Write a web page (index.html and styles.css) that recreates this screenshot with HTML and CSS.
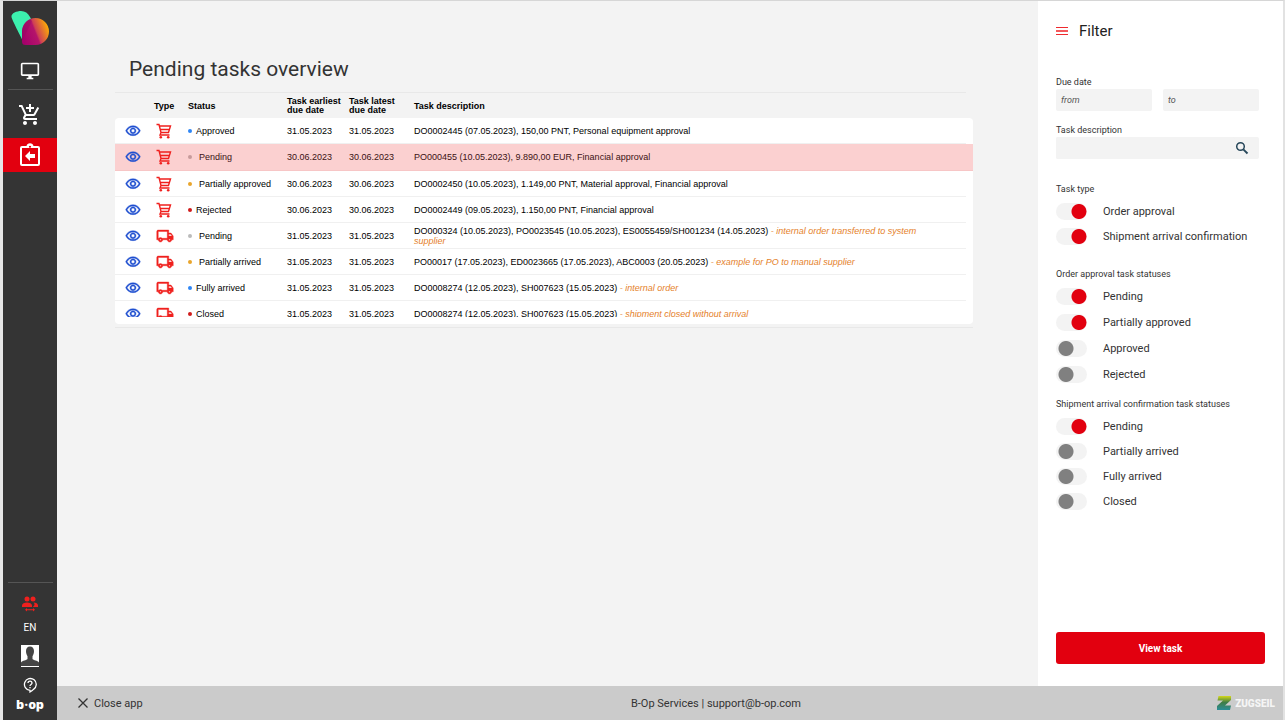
FILE: index.html
```html
<!DOCTYPE html>
<html lang="en">
<head>
<meta charset="utf-8">
<title>Pending tasks overview</title>
<link rel="stylesheet" href="styles.css">
</head>
<body>
<svg class="sprite" aria-hidden="true">
  <symbol id="eye" viewBox="0 0 24 24"><path stroke="currentColor" stroke-width=".6" d="M12 6c3.79 0 7.17 2.13 8.82 5.5C19.17 14.87 15.79 17 12 17s-7.17-2.13-8.82-5.5C4.83 8.13 8.21 6 12 6m0-2C7 4 2.73 7.11 1 11.5 2.73 15.89 7 19 12 19s9.27-3.11 11-7.5C21.27 7.11 17 4 12 4zm0 5c1.38 0 2.5 1.12 2.5 2.5S13.38 14 12 14s-2.5-1.12-2.5-2.5S10.62 9 12 9m0-2c-2.48 0-4.500 2.02-4.500 4.500S9.520 16 12 16s4.500-2.020 4.500-4.500S14.480 7 12 7z"/></symbol>
  <symbol id="cart" viewBox="0 0 16 16"><path d="M.5 1.500H3L5 9.500H12.500L14.500 3H3.400M4.200 6.500H13.300M5 9.500L4 12H13.500" fill="none" stroke="currentColor" stroke-width="1.400"/><circle cx="4.800" cy="14.200" r="1.300"/><circle cx="12.200" cy="14.200" r="1.300"/></symbol>
  <symbol id="truck" viewBox="0 0 24 24"><path stroke="currentColor" stroke-width=".5" d="M20 8h-3V4H3c-1.1 0-2 .9-2 2v11h2c0 1.66 1.34 3 3 3s3-1.34 3-3h6c0 1.66 1.34 3 3 3s3-1.34 3-3h2v-5l-3-4zM6 18c-.55 0-1-.45-1-1s.45-1 1-1 1 .45 1 1-.45 1-1 1zm9-3H8.220c-.55-.61-1.330-1-2.220-1s-1.670.39-2.220 1H3V6h12v9zm3 3c-.55 0-1-.45-1-1s.45-1 1-1 1 .45 1 1-.45 1-1 1zm-1-6V9.500h2.500l1.960 2.500H17z"/></symbol>
</svg>
<div class="app">
  <nav class="sidebar" aria-label="Main">
    <svg class="brand" viewBox="0 0 38 34" role="img" aria-label="Logo">
      <defs>
        <linearGradient id="warm" x1="0" y1=".7" x2="1" y2=".3"><stop offset="0" stop-color="#a5006b"/><stop offset=".48" stop-color="#b4146a"/><stop offset=".54" stop-color="#cf3f55"/><stop offset="1" stop-color="#ffb400"/></linearGradient>
      </defs>
      <path d="M.5 6C0 2 6 0 10 0c4 0 7 2 9 6l2 4-9 20C10 26 1 9 .5 6z" fill="#3cf0ae"/>
      <path d="M24.500 7A13.500 13.500 0 1 1 24.500 34H14.500Q11 34 11 30.500V20.500A13.500 13.500 0 0 1 24.500 7z" fill="url(#warm)"/>
      <path d="M19 8l2 2-10 20V20.500C11 15 14 10 19 8z" fill="#8c0b62" opacity=".35"/>
    </svg>
    <button class="nav-item desktop" aria-label="Desktop"><svg width="20" height="20" viewBox="0 0 24 24"><path d="M21 2H3c-1.100 0-2 .9-2 2v12c0 1.100.9 2 2 2h7v2H8v2h8v-2h-2v-2h7c1.100 0 2-.9 2-2V4c0-1.100-.9-2-2-2zm0 14H3V4h18v12z"/></svg></button>
    <hr class="rule">
    <button class="nav-item shop" aria-label="Shop"><svg width="24" height="24" viewBox="0 0 24 24"><path d="M11 9h2V6h3V4h-3V1h-2v3H8v2h3v3zm-4 9c-1.100 0-1.990.9-1.990 2S5.900 22 7 22s2-.9 2-2-.9-2-2-2zm10 0c-1.100 0-1.990.9-1.990 2s.89 2 1.990 2 2-.9 2-2-.9-2-2-2zm-9.830-3.250l.03-.12.9-1.630h7.450c.75 0 1.410-.41 1.750-1.030l3.860-7.010L19.420 4h-.01l-1.100 2-2.760 5H8.530l-.13-.27L6.160 6l-.95-2-.94-2H1v2h2l3.600 7.590-1.350 2.450c-.16.28-.25.61-.25.96 0 1.100.9 2 2 2h12v-2H7.420c-.13 0-.25-.11-.25-.25z"/></svg></button>
    <button class="nav-item active" aria-label="Tasks"><svg width="24" height="24" viewBox="0 0 24 24"><path fill-rule="evenodd" d="M4 3h4.500a3.600 3.600 0 0 1 7 0H20q2 0 2 2v16q0 2-2 2H4q-2 0-2-2V5q0-2 2-2zM4 5v16h16V5zM12 2.700a1 1 0 1 0 .01 0zM12 8v3h5v4h-5v3l-5-5z"/></svg></button>
    <div class="nav-bottom">
      <hr class="rule">
      <button class="nav-item switch" aria-label="Switch user"><svg width="16" height="16" viewBox="0 0 16 16"><circle cx="5" cy="3" r="2.500"/><circle cx="11" cy="3" r="2.500"/><path d="M0 11V9.500C0 7.500 2.500 6.500 5 6.500s5 1 5 3V11zM11 11h5V9.500c0-2-2-2.900-4.500-3 .8.600 1 1.500 1 2.500zM3 13.800l2-1.800v1.300h6V12l2 1.800-2 1.800v-1.300H5v1.300z"/></svg></button>
      <button class="nav-item lang">EN</button>
      <button class="nav-item" aria-label="Profile"><svg width="18" height="22" viewBox="0 0 18 22"><path fill="#fff" d="M0 0h18v22H0z"/><path fill="#454545" d="M9 1.500c2.500 0 4 1.800 4 4.500 0 2.500-.8 4-1.500 5.200V14c1 1.300 5 1.500 6.500 3.500V21H0v-3.500c1.500-2 5.500-2.200 6.500-3.500v-2.800C5.800 10 5 8.500 5 6c0-2.700 1.500-4.500 4-4.500z"/></svg></button>
      <button class="nav-item help" aria-label="Help"><svg class="line" width="16" height="16" viewBox="0 0 16 16" stroke="#fff" stroke-width="1.300"><path d="M8 15v-1.700A5.900 5.900 0 1 1 11.500 12.400Q10 14 8 15z"/><path d="M6 6c0-2.600 4-2.600 4 0 0 1.400-2 1.500-2 3M8 10v1.300"/></svg></button>
      <span class="bop">b·op</span>
    </div>
  </nav>
  <div class="stage">
    <div class="content">
      <main class="main">
        <h1>Pending tasks overview</h1>
        <div class="list">
          <div class="scroll">
            <table>
              <colgroup><col class="c-view"><col class="c-type"><col class="c-status"><col class="c-first"><col class="c-last"><col><col class="c-end"></colgroup>
              <thead><tr><th></th><th>Type</th><th>Status</th><th>Task earliest<br>due date</th><th>Task latest<br>due date</th><th>Task description</th><th class="end"></th></tr></thead>
              <tbody>
                <tr><td><svg class="eye"><use href="#eye"/></svg></td><td><svg class="type"><use href="#cart"/></svg></td><td><span class="status blue">Approved</span></td><td>31.05.2023</td><td>31.05.2023</td><td>DO0002445 (07.05.2023), 150,00 PNT, Personal equipment approval</td><td class="end"></td></tr>
                <tr class="selected"><td><svg class="eye"><use href="#eye"/></svg></td><td><svg class="type"><use href="#cart"/></svg></td><td><span class="status gray">Pending</span></td><td>30.06.2023</td><td>30.06.2023</td><td>PO000455 (10.05.2023), 9.890,00 EUR, Financial approval</td><td class="end"></td></tr>
                <tr><td><svg class="eye"><use href="#eye"/></svg></td><td><svg class="type"><use href="#cart"/></svg></td><td><span class="status amber">Partially approved</span></td><td>30.06.2023</td><td>30.06.2023</td><td>DO0002450 (10.05.2023), 1.149,00 PNT, Material approval, Financial approval</td><td class="end"></td></tr>
                <tr><td><svg class="eye"><use href="#eye"/></svg></td><td><svg class="type"><use href="#cart"/></svg></td><td><span class="status red">Rejected</span></td><td>30.06.2023</td><td>30.06.2023</td><td>DO0002449 (09.05.2023), 1.150,00 PNT, Financial approval</td><td class="end"></td></tr>
                <tr><td><svg class="eye"><use href="#eye"/></svg></td><td><svg class="type truck"><use href="#truck"/></svg></td><td><span class="status gray">Pending</span></td><td>31.05.2023</td><td>31.05.2023</td><td>DO000324 (10.05.2023), PO0023545 (10.05.2023), ES0055459/SH001234 (14.05.2023) <em>- internal order transferred to system supplier</em></td><td class="end"></td></tr>
                <tr><td><svg class="eye"><use href="#eye"/></svg></td><td><svg class="type truck"><use href="#truck"/></svg></td><td><span class="status amber">Partially arrived</span></td><td>31.05.2023</td><td>31.05.2023</td><td>PO00017 (17.05.2023), ED0023665 (17.05.2023), ABC0003 (20.05.2023) <em>- example for PO to manual supplier</em></td><td class="end"></td></tr>
                <tr><td><svg class="eye"><use href="#eye"/></svg></td><td><svg class="type truck"><use href="#truck"/></svg></td><td><span class="status blue">Fully arrived</span></td><td>31.05.2023</td><td>31.05.2023</td><td>DO0008274 (12.05.2023), SH007623 (15.05.2023) <em>- internal order</em></td><td class="end"></td></tr>
                <tr><td><svg class="eye"><use href="#eye"/></svg></td><td><svg class="type truck"><use href="#truck"/></svg></td><td><span class="status red">Closed</span></td><td>31.05.2023</td><td>31.05.2023</td><td>DO0008274 (12.05.2023), SH007623 (15.05.2023) <em>- shipment closed without arrival</em></td><td class="end"></td></tr>
              </tbody>
            </table>
          </div>
          <div class="list-end"></div>
        </div>
      </main>
      <aside class="filter">
        <h2><svg width="12" height="9" viewBox="0 0 12 9"><path fill="#ee2a2e" d="M0 0h12v1H0zM0 7h12v1H0z"/><path fill="#f4595c" d="M0 3h12v2H0z"/></svg>Filter</h2>
        <form class="form">
          <div class="fields">
            <label for="from">Due date</label>
            <div class="dates"><input id="from" type="text" placeholder="from"><input type="text" placeholder="to" aria-label="Due date to"></div>
            <label for="desc">Task description</label>
            <div class="search"><input id="desc" type="text"><button type="button" aria-label="Search"><svg class="line" width="14" height="14" viewBox="0 0 14 14" stroke="#27475a"><circle cx="5.500" cy="5.500" r="3.800" stroke-width="1.500"/><path d="M8.300 8.300L12.500 12.500" stroke-width="1.900"/></svg></button></div>
          </div>
          <fieldset class="kinds"><legend>Task type</legend>
            <label><input type="checkbox" checked>Order approval</label>
            <label><input type="checkbox" checked>Shipment arrival confirmation</label>
          </fieldset>
          <fieldset class="orders"><legend>Order approval task statuses</legend>
            <label><input type="checkbox" checked>Pending</label>
            <label><input type="checkbox" checked>Partially approved</label>
            <label><input type="checkbox">Approved</label>
            <label><input type="checkbox">Rejected</label>
          </fieldset>
          <fieldset><legend>Shipment arrival confirmation task statuses</legend>
            <label><input type="checkbox" checked>Pending</label>
            <label><input type="checkbox">Partially arrived</label>
            <label><input type="checkbox">Fully arrived</label>
            <label><input type="checkbox">Closed</label>
          </fieldset>
          <button class="primary" type="button">View task</button>
        </form>
      </aside>
    </div>
    <footer class="footer">
      <button class="close"><svg width="10" height="10" viewBox="0 0 10 10"><path d="M.5.5l9 9M9.500.5l-9 9" stroke="#333" stroke-width="1.300"/></svg>Close app</button>
      <span>B-Op Services | support@b-op.com</span>
      <span class="zugseil"><svg width="14" height="14" viewBox="0 0 14 14"><defs><linearGradient id="z" x1="0" y1="0" x2="0" y2="1"><stop offset="0" stop-color="#d4d81a"/><stop offset=".45" stop-color="#3f7d45"/><stop offset="1" stop-color="#2b8d98"/></linearGradient></defs><path fill="url(#z)" d="M1.500 0H14v4L8 9.500h6L13 14H0v-4l6-5.500H.5z"/></svg>ZUGSEIL</span>
    </footer>
  </div>
</div>
</body>
</html>
```
FILE: styles.css
```css
* { box-sizing: border-box; }
body { margin: 0; background: #f3f3f3; color: #333; font-family: Roboto, sans-serif; font-size: 11px; }
button { border: 0; padding: 0; background: none; color: inherit; font: inherit; cursor: pointer; }
svg { display: block; fill: currentColor; }
svg.line { fill: none; }
.sprite { position: absolute; width: 0; height: 0; }
.app { display: flex; min-height: 100vh; border-top: 1px solid #d6d6d6; border-left: 3px solid #e6e6e6; border-right: 2px solid #e2e2e2; }

.sidebar { display: flex; flex-direction: column; align-items: center; flex: none; width: 54px; padding-top: 10px; background: #343434; color: #fff; }
.brand { width: 38px; height: 34px; }
.nav-item { display: flex; justify-content: center; align-items: center; width: 100%; }
.rule { width: 45px; height: 1px; margin: 0; border: 0; background: #555; }
.desktop { margin: 16px 0 8px; }
.shop { margin: 13px 0 11px; }
.active { height: 34px; background: #e2000f; }
.nav-bottom { display: flex; flex-direction: column; align-items: center; width: 100%; margin-top: auto; padding-bottom: 7px; }
.switch { margin: 13px 0 10px; color: #f0201e; }
.lang { margin-bottom: 11px; font-size: 10px; line-height: 12px; }
.help { margin: 10px 0 4px; }
.bop { font: 900 12px/16px Inter, sans-serif; }

.stage { display: flex; flex: 1; flex-direction: column; min-width: 0; }
.content { display: flex; flex: 1; }
.main { flex: 1; min-width: 0; padding: 54px 65px 0 58px; }
h1 { margin: 0 0 9px 14px; color: #333; font-size: 21px; font-weight: 400; line-height: 28px; }
.list { border-bottom: 1px solid #e8e8e8; padding-bottom: 3px; }
.scroll { height: 225px; overflow: hidden; }
table { width: 100%; border-collapse: separate; border-spacing: 0; table-layout: fixed; color: #000; font: 9px/10px "Liberation Sans", Arial, sans-serif; }
.c-view { width: 39px; }
.c-type { width: 34px; }
.c-status { width: 99px; }
.c-first { width: 62px; }
.c-last { width: 65px; }
.c-end { width: 7px; }
th { height: 26px; padding: 1px 0 0; border-top: 1px solid #e8e8e8; color: #000; font-weight: 700; line-height: 9px; text-align: left; }
td { height: 26px; padding: 0; border-bottom: 1px solid #f0f0f0; background: #fff; }
td:nth-child(6) { padding-right: 24px; }
th.end, td.end { border-color: transparent; }
tbody tr:first-child td:first-child { border-top-left-radius: 4px; }
tbody tr:first-child td:last-child { border-top-right-radius: 4px; }
.selected td { height: 27px; border-color: #f7c6c6; background: #fbd0d0; color: #3c1214; }
.eye { width: 16px; height: 16px; margin-left: 10px; color: #1f4fd0; }
.type { width: 16px; height: 16px; margin-left: 2px; color: #f0201e; }
.truck { width: 18px; height: 18px; }
.status { display: flex; align-items: center; gap: 4px; }
.status::before { width: 4px; height: 4px; border-radius: 50%; background: currentColor; content: ""; }
.blue::before { background: #2f86f5; }
.gray::before { background: #bbb; }
.amber::before { background: #e9a52c; }
.red::before { background: #d01c1c; }
.gray, .amber { gap: 7px; }
.selected .gray::before { background: #c79b9b; }
em { color: #e5812a; }
.list-end { height: 7px; border-radius: 0 0 4px 4px; background: #fff; }

.filter { display: flex; flex: none; flex-direction: column; width: 245px; padding: 20px 18px 22px; background: #fff; }
h2 { display: flex; align-items: center; gap: 11px; margin: 0 0 35px; color: #222; font-size: 15px; font-weight: 400; line-height: 20px; }
.form { display: flex; flex: 1; flex-direction: column; }
.fields { display: flex; flex-direction: column; margin-right: 6px; font-size: 9px; line-height: 12px; }
.fields input { width: 100%; min-width: 0; height: 22px; padding: 0 5px; border: 0; border-radius: 2px; background: #f3f3f3; font: 9px Roboto, sans-serif; }
.fields label { margin-bottom: 1px; }
.dates { display: flex; gap: 11px; margin-bottom: 13px; }
.fields ::placeholder { color: #555; font-style: italic; }
.search { display: flex; align-items: center; border-radius: 2px; background: #f3f3f3; }
.search button { margin-right: 10px; }
fieldset { display: flex; flex-direction: column; gap: 8px; min-width: 0; margin: 0; padding: 0; border: 0; }
legend { margin-bottom: 8px; padding: 0; font-size: 9px; line-height: 12px; }
fieldset label { display: flex; align-items: center; gap: 16px; height: 17px; }
.kinds { margin: 24px 0 23px; }
.orders { gap: 9px; margin-bottom: 15px; }
fieldset input { flex: none; width: 31px; height: 17px; margin: 0; border-radius: 9px; background: radial-gradient(circle at 10px 50%, #808080 7px, #f3f3f3 8px); appearance: none; }
fieldset input:checked { background: radial-gradient(circle at 23px 50%, #e2000f 7px, #f3f3f3 8px); }
.primary { width: 209px; height: 32px; margin-top: auto; border-radius: 3px; background: #e2000f; color: #fff; font-size: 10px; font-weight: 700; }

.footer { display: grid; grid-template-columns: 7fr auto 6fr; align-items: center; height: 34px; padding: 0 8px 0 21px; background: #cbcbcb; }
.close { display: flex; align-items: center; gap: 6px; }
.zugseil { display: flex; align-items: center; justify-self: end; gap: 4px; color: #f5f5f5; font-size: 10px; font-weight: 900; }
```
